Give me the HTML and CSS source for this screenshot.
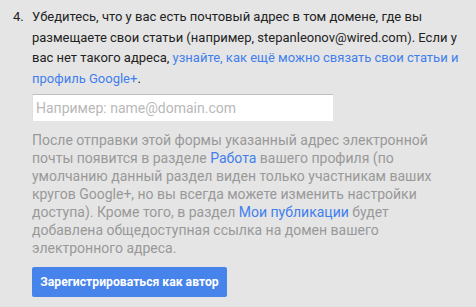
FILE: index.html
```html
<!DOCTYPE html>
<html lang="ru">
<head>
  <meta charset="UTF-8" />
  <title>Регистрация автора</title>
  <link rel="stylesheet" href="styles.css">
</head>
<body>
  <div class="step">
    <div class="num">4.</div>
    <div class="content">
      <p class="lead">Убедитесь, что у вас есть почтовый адрес в том домене, где вы размещаете свои статьи (например, stepanleonov@wired.com). Если у вас нет такого адреса, <a href="#">узнайте, как ещё можно связать свои статьи и профиль Google+</a>.</p>

      <input type="text" class="email" placeholder="Например: name@domain.com" />

      <p class="note">После отправки этой формы указанный адрес электронной почты появится в разделе <a href="#">Работа</a> вашего профиля (по умолчанию данный раздел виден только участникам ваших кругов Google+, но вы всегда можете изменить настройки доступа). Кроме того, в раздел <a href="#">Мои публикации</a> будет добавлена общедоступная ссылка на домен вашего электронного адреса.</p>

      <button class="submit">Зарегистрироваться как автор</button>
    </div>
  </div>
</body>
</html>
```

FILE: styles.css
```css
body {
  margin: 0;
  font-family: Roboto, "Liberation Sans", sans-serif;
  background: #e5e5e5;
  color: #222;
  font-size: 14px;
}

.step {
  display: flex;
  padding: 7px 0 0 13px;
}

.num {
  width: 19px;
  font-size: 13px;
  line-height: 20.5px;
}

.content {
  width: 432px;
}

p {
  margin: 0;
}

a {
  color: #427fed;
  text-decoration: none;
}

.lead {
  font-size: 13px;
  line-height: 20.5px;
  width: 432px;
}

.email {
  display: block;
  box-sizing: border-box;
  width: 301px;
  height: 27px;
  margin-top: 5px;
  padding: 0 3px;
  border: none;
  border-top: 1px solid #c0c0c0;
  border-left: 1px solid #e0e0e0;
  background: #fff;
  font-family: Roboto, "Liberation Sans", sans-serif;
  font-size: 14px;
  outline: none;
}

.email::placeholder {
  color: #b8b8b8;
}

.note {
  margin-top: 10px;
  width: 400px;
  color: #999;
  line-height: 18px;
}

.submit {
  display: block;
  margin-top: 10px;
  height: 30px;
  width: 195px;
  padding: 0;
  border: none;
  border-radius: 2px;
  background: #4683ea;
  color: #fff;
  font-family: Roboto, "Liberation Sans", sans-serif;
  font-size: 12.2px;
  font-weight: bold;
}
```
